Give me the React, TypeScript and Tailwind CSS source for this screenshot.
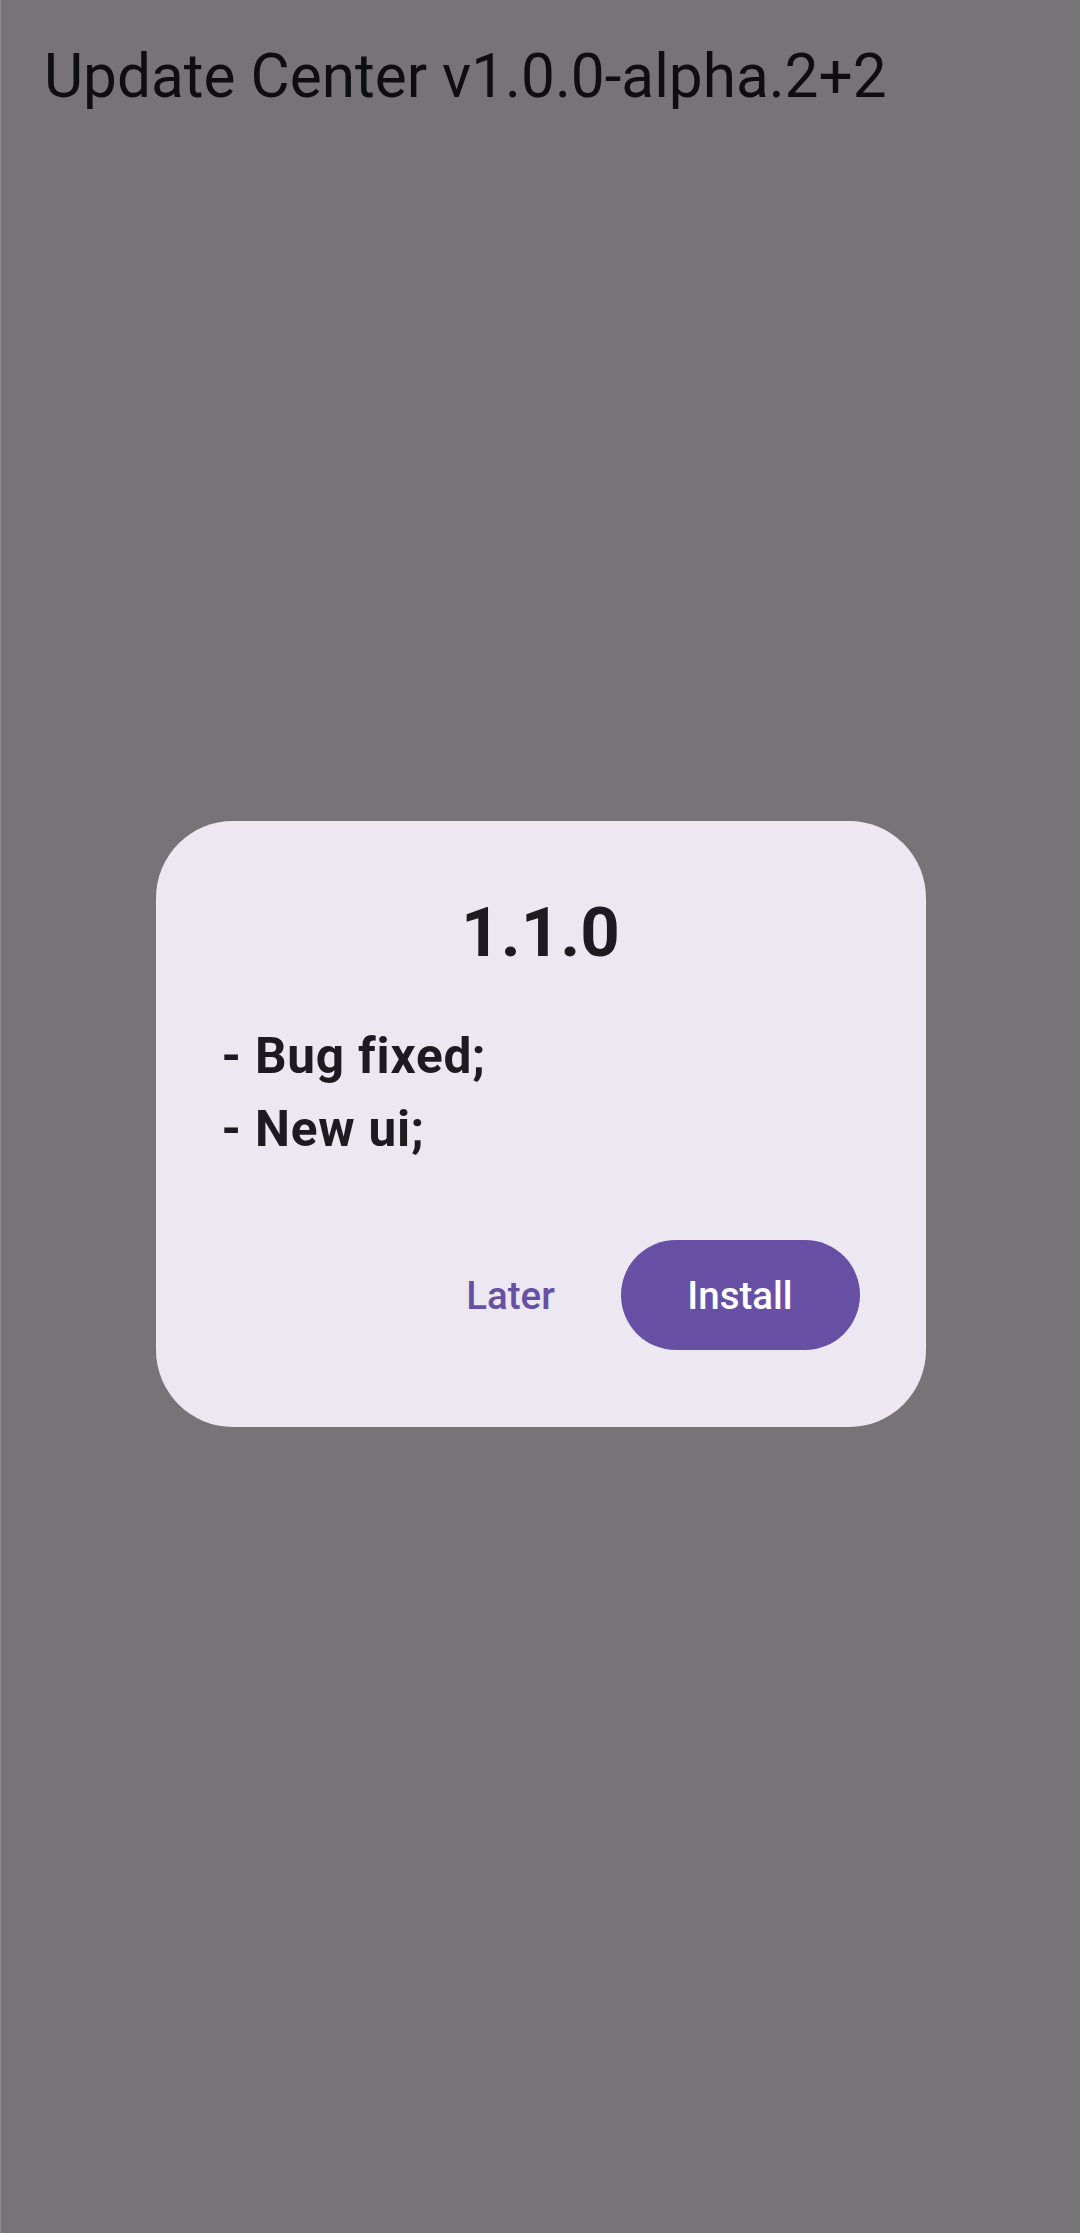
import React from "react";

export default function App() {
  return (
    <div
      className="w-[1080px] h-[2233px] bg-[#767477] border-l border-[#8f8d90] flex flex-col [font-variant-ligatures:none]"
      style={{ fontFamily: "Roboto, 'Noto Sans', sans-serif" }}
    >
      <div className="h-[154px] flex items-center pl-[43px] shrink-0">
        <span className="text-[60.3px] leading-[70px] text-[#0e0d10] font-normal">
          Update Center v1.0.0-alpha.2+2
        </span>
      </div>
      <div className="flex justify-center pt-[667px]">
        <div className="w-[770px] bg-[#EDE7F2] rounded-[77px] flex flex-col pt-[71px] pb-[77px] px-[66px]">
          <div className="text-center text-[69px] leading-[81px] font-bold text-[#1D1B20]">
            1.1.0
          </div>
          <div className="mt-[47px] flex flex-col text-[49.5px] leading-[72.7px] tracking-[0.8px] font-bold text-[#1D1B20]">
            <div>- Bug fixed;</div>
            <div>- New ui;</div>
          </div>
          <div className="mt-[75px] flex justify-end items-center gap-[34px]">
            <button className="w-[152px] h-[110px] flex items-center justify-center text-[38.5px] font-medium text-[#6750A4]">
              Later
            </button>
            <button className="w-[239px] h-[110px] rounded-full bg-[#6750A4] flex items-center justify-center text-[38.5px] font-medium text-white">
              Install
            </button>
          </div>
        </div>
      </div>
    </div>
  );
}
